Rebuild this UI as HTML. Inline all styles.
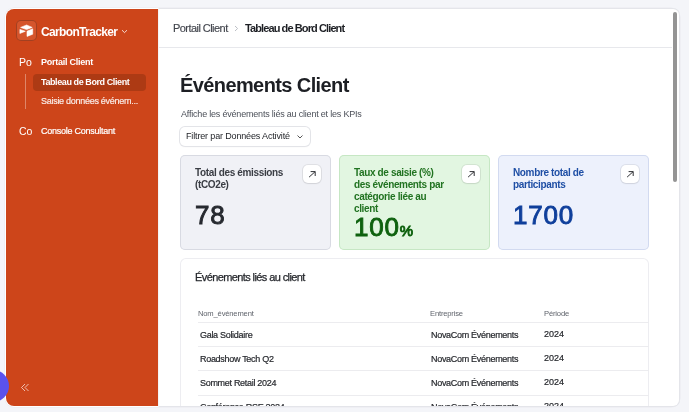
<!DOCTYPE html>
<html><head><meta charset="utf-8">
<style>
*{box-sizing:border-box;margin:0;padding:0}
html,body{width:689px;height:412px;overflow:hidden;background:#f4f5f9;font-family:"Liberation Sans",sans-serif;}
.abs{position:absolute;white-space:nowrap}
body{will-change:transform}
#card{position:absolute;left:5px;top:8px;width:675px;height:399px;background:#fff;border-radius:9px;box-shadow:0 0 0 0.5px #e9eaef}
#clip{position:absolute;left:159px;top:9px;width:520px;height:397px;overflow:hidden;border-radius:0 6px 6px 0}
#inner{position:absolute;left:-159px;top:-9px;width:689px;height:412px}
#main{position:absolute;left:158px;top:8px;width:522px;height:399px;background:#fff;border:1px solid #e4e5ea;border-left-color:#f4f4f6;border-radius:0 7px 7px 0}
#side{position:absolute;left:6px;top:9px;width:152px;height:397px;background:#cd451a;border-radius:8px 0 0 8px}
#logo{position:absolute;left:16px;top:20px;width:21px;height:21px;border-radius:5px;background:#d5552c;box-shadow:inset 0 0 0 1px rgba(0,0,0,.24)}
.brand{left:41px;top:25px;font-size:12px;font-weight:bold;color:#fff;letter-spacing:-0.65px}
.nav{color:#fff;font-size:9px}
#active{position:absolute;left:33px;top:74px;width:113px;height:17px;background:#ad3a14;border-radius:4px}
#vline{position:absolute;left:25px;top:74px;width:1px;height:35px;background:rgba(255,255,255,.35)}
#header-line{position:absolute;left:158px;top:47px;width:514px;height:1px;background:#e7e8ec}
#thumb{position:absolute;left:673px;top:12px;width:4px;height:170px;background:#949494;border-radius:2px}
.kpi{position:absolute;top:155px;width:151px;height:95px;border-radius:5px}
.kpi .t{position:absolute;left:15px;top:12.4px;font-size:10px;font-weight:bold;line-height:11.8px;white-space:nowrap;letter-spacing:-0.36px}
.num{font-size:26px;letter-spacing:0.8px;-webkit-text-stroke:0.9px currentColor}
.arrow{position:absolute;top:10px;width:18px;height:18px;background:#fff;border-radius:5px;box-shadow:0 0 0 1px rgba(0,0,0,.07),0 1px 2px rgba(0,0,0,.06)}
.arrow svg{position:absolute;left:0;top:0}
#tcard{position:absolute;left:180px;top:258px;width:469px;height:200px;border-radius:6px;box-shadow:inset 0 0 0 1px #ededf1}
.hdr{font-size:7.6px;color:#5f636b;letter-spacing:-0.17px}
.cell{font-size:9px;color:#26282d;letter-spacing:-0.3px;-webkit-text-stroke:0.2px currentColor}
.yr{letter-spacing:0}
.rline{position:absolute;left:198px;width:451px;height:1px;background:#ececef}
</style></head>
<body>
<div id="card"></div>
<div id="main"></div>
<div id="side"></div>
<div id="logo"><svg width="21" height="21" viewBox="0 0 21 21"><g fill="#fff" stroke="#fff" stroke-width="0.6" stroke-linejoin="round"><path d="M4.6 7.4L10.6 5.0L16.2 7.4L10.6 9.6Z"/><path d="M11.0 11.2L16.7 8.8V14.2L11.0 16.4Z"/><path d="M3.9 9.4L9.3 11.3L3.9 13.4Z"/></g></svg></div>
<div class="abs brand">CarbonTracker</div>
<svg class="abs" style="left:121px;top:29px" width="7" height="5" viewBox="0 0 7 5"><path d="M1 1.2L3.5 3.6L6 1.2" fill="none" stroke="rgba(255,255,255,.8)" stroke-width="1"/></svg>

<div class="abs nav" style="left:19px;top:56px;font-size:10.5px;color:#fff">Po</div>
<div class="abs nav" style="left:41px;top:57px;font-weight:bold;letter-spacing:-0.25px">Portail Client</div>
<div id="vline"></div>
<div id="active"></div>
<div class="abs nav" style="left:41px;top:77px;font-weight:bold;letter-spacing:-0.41px">Tableau de Bord Client</div>
<div class="abs nav" style="left:41px;top:96px;color:rgba(255,255,255,.85);letter-spacing:-0.28px;-webkit-text-stroke:0.2px currentColor">Saisie données événem...</div>
<div class="abs nav" style="left:19px;top:125px;font-size:10.5px">Co</div>
<div class="abs nav" style="left:41px;top:126px;letter-spacing:-0.25px;-webkit-text-stroke:0.2px currentColor">Console Consultant</div>
<svg class="abs" style="left:20px;top:383px" width="10" height="9" viewBox="0 0 10 9"><path d="M5 1L1.5 4.5L5 8M8.5 1L5 4.5L8.5 8" fill="none" stroke="rgba(255,255,255,.65)" stroke-width="1"/></svg>
<div class="abs" style="left:-23px;top:370px;width:32px;height:32px;border-radius:50%;background:#5b52ee"></div>

<div id="clip"><div id="inner">
<!-- header -->
<div class="abs" style="left:173px;top:22px;font-size:11px;color:#42454d;letter-spacing:-0.55px;-webkit-text-stroke:0.15px currentColor">Portail Client</div>
<svg class="abs" style="left:234px;top:25px" width="5" height="7" viewBox="0 0 5 7"><path d="M1 1L3.6 3.5L1 6" fill="none" stroke="#bcbfc6" stroke-width="1"/></svg>
<div class="abs" style="left:245px;top:22px;font-size:11px;font-weight:bold;color:#1d1f24;letter-spacing:-0.9px">Tableau de Bord Client</div>
<div id="header-line"></div>
<div id="thumb"></div>

<!-- title -->
<div class="abs" style="left:180px;top:74px;font-size:20px;font-weight:bold;color:#1d1f24;letter-spacing:-0.6px">Événements Client</div>
<div class="abs" style="left:181px;top:109px;font-size:9px;color:#4c5059;letter-spacing:-0.2px">Affiche les événements liés au client et les KPIs</div>
<div class="abs" style="left:180px;top:127px;width:130px;height:19px;border-radius:5px;box-shadow:0 0 0 1px #e3e4e8,0 1px 2px rgba(0,0,0,.05);background:#fff"></div>
<div class="abs" style="left:186px;top:131px;font-size:9px;color:#1d1f24;letter-spacing:-0.15px">Filtrer par Données Activité</div>
<svg class="abs" style="left:296px;top:134px" width="8" height="6" viewBox="0 0 8 6"><path d="M1.5 1.5L4 4L6.5 1.5" fill="none" stroke="#555" stroke-width="1"/></svg>

<!-- KPI cards -->
<div class="kpi" style="left:180px;background:#f0f1f6;box-shadow:inset 0 0 0 1px #d8dae2">
  <div class="t" style="color:#3a3d44">Total des émissions<br>(tCO2e)</div>
  <div class="abs num" style="left:15px;top:45px;color:#26292f">78</div>
  <div class="arrow" style="left:123px"><svg width="18" height="18" viewBox="0 0 18 18"><path d="M6.1 12.1L12.2 6.6M7.6 6.6H12.2V11" fill="none" stroke="#303236" stroke-width="1"/></svg></div>
</div>
<div class="kpi" style="left:339px;background:#e2f6e1;box-shadow:inset 0 0 0 1px #c6e7c4">
  <div class="t" style="color:#217321">Taux de saisie (%)<br>des événements par<br>catégorie liée au<br>client</div>
  <div class="abs num" style="left:15px;top:57px;color:#0f620f">100<span style="font-size:15px;letter-spacing:0;margin-left:0px">%</span></div>
  <div class="arrow" style="left:123px"><svg width="18" height="18" viewBox="0 0 18 18"><path d="M6.1 12.1L12.2 6.6M7.6 6.6H12.2V11" fill="none" stroke="#303236" stroke-width="1"/></svg></div>
</div>
<div class="kpi" style="left:498px;background:#edf1fc;box-shadow:inset 0 0 0 1px #d2daf0">
  <div class="t" style="color:#1f4fa5">Nombre total de<br>participants</div>
  <div class="abs num" style="left:15px;top:45px;color:#0f3f9b">1700</div>
  <div class="arrow" style="left:123px"><svg width="18" height="18" viewBox="0 0 18 18"><path d="M6.1 12.1L12.2 6.6M7.6 6.6H12.2V11" fill="none" stroke="#303236" stroke-width="1"/></svg></div>
</div>

<!-- table card -->
<div id="tcard"></div>
<div class="abs" style="left:195px;top:271px;font-size:11px;color:#26282d;letter-spacing:-0.6px;-webkit-text-stroke:0.25px currentColor">Événements liés au client</div>
<div class="abs hdr" style="left:198px;top:309px">Nom_événement</div>
<div class="abs hdr" style="left:430px;top:309px">Entreprise</div>
<div class="abs hdr" style="left:544px;top:309px">Période</div>
<div class="rline" style="top:322px"></div>
<div class="abs cell" style="left:200px;top:330px">Gala Solidaire</div>
<div class="abs cell" style="left:431px;top:330px">NovaCom Événements</div>
<div class="abs cell yr" style="left:544px;top:329px">2024</div>
<div class="rline" style="top:346px"></div>
<div class="abs cell" style="left:200px;top:354px">Roadshow Tech Q2</div>
<div class="abs cell" style="left:431px;top:354px">NovaCom Événements</div>
<div class="abs cell yr" style="left:544px;top:353px">2024</div>
<div class="rline" style="top:370px"></div>
<div class="abs cell" style="left:200px;top:378px">Sommet Retail 2024</div>
<div class="abs cell" style="left:431px;top:378px">NovaCom Événements</div>
<div class="abs cell yr" style="left:544px;top:377px">2024</div>
<div class="rline" style="top:395px"></div>
<div class="abs cell" style="left:200px;top:402px">Conférence RSE 2024</div>
<div class="abs cell" style="left:431px;top:402px">NovaCom Événements</div>
<div class="abs cell yr" style="left:544px;top:401px">2024</div>
<!-- bottom bg cover -->
</div></div>
</body></html>
